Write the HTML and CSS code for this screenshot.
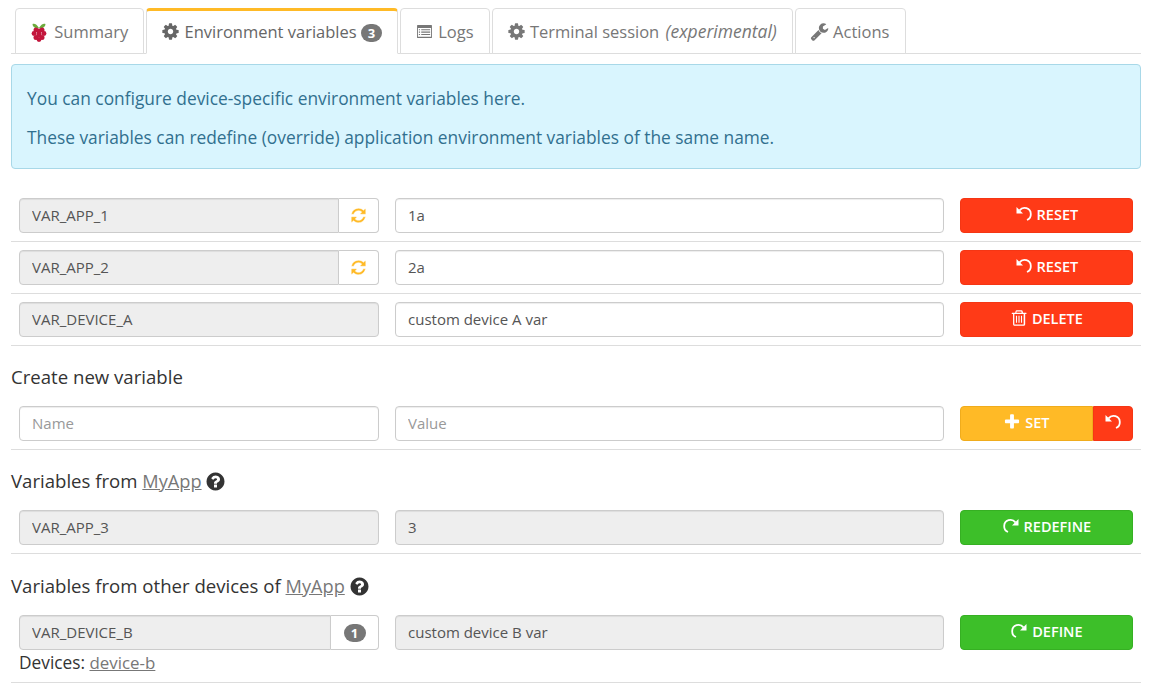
FILE: index.html
```html
<!DOCTYPE html>
<html lang="en">
<head>
  <meta charset="UTF-8" />
  <title>Environment variables</title>
  <link rel="stylesheet" href="styles.css">
</head>
<body>
  <svg class="sprite" xmlns="http://www.w3.org/2000/svg">
    <symbol id="i-cog" viewBox="0 0 1792 1792"><path d="M1152 896q0-106-75-181t-181-75-181 75-75 181 75 181 181 75 181-75 75-181zm512-109v222q0 12-8 23t-20 13l-185 28q-19 54-39 91 35 50 107 138 10 12 10 25t-9 23q-27 37-99 108t-94 71q-12 0-26-9l-138-108q-44 23-91 38-16 136-29 186-7 28-36 28h-222q-14 0-24.5-8.5t-11.5-21.5l-28-184q-49-16-90-37l-141 107q-10 9-25 9-14 0-25-11-126-114-165-168-7-10-7-23 0-12 8-23 15-21 51-66.5t54-70.5q-27-50-41-99l-183-27q-13-2-21-12.5t-8-23.5v-222q0-12 8-23t19-13l186-28q14-46 39-92-40-57-107-138-10-12-10-24 0-10 9-23 26-36 98.5-107.5t94.5-71.5q13 0 26 10l138 107q44-23 91-38 16-136 29-186 7-28 36-28h222q14 0 24.5 8.5t11.5 21.5l28 184q49 16 90 37l142-107q9-9 24-9 13 0 25 10 129 119 165 170 7 8 7 22 0 12-8 23-15 21-51 66.5t-54 70.5q26 50 41 98l183 28q13 2 21 12.5t8 23.5z"/></symbol>
    <symbol id="i-list" viewBox="-128 -128 2048 2048"><path fill-rule="evenodd" d="M160 192h1472q66 0 66 66v1276q0 66-66 66H160q-66 0-66-66V258q0-66 66-66zm32 320v928q0 32 32 32h1344q32 0 32-32V512z"/><path d="M288 640h128v128H288zM544 640h960v128H544zM288 896h128v128H288zM544 896h960v128H544zM288 1152h128v128H288zM544 1152h960v128H544z"/></symbol>
    <symbol id="i-wrench" viewBox="0 0 1792 1792"><path d="M448 1472q0-26-19-45t-45-19-45 19-19 45 19 45 45 19 45-19 19-45zm644-420l-682 682q-37 37-90 37-52 0-91-37l-106-108q-38-36-38-90 0-53 38-91l681-681q39 98 114.5 173.5t173.5 114.5zm634-435q0 39-23 106-47 134-164.5 217.5t-258.5 83.5q-185 0-316.5-131.5t-131.5-316.5 131.5-316.5 316.5-131.5q58 0 121.5 16.5t107.5 46.5q16 11 16 28t-16 28l-293 169v224l193 107q5-3 79-48.5t135.5-81 70.5-35.5q15 0 23.5 10t8.5 25z"/></symbol>
    <symbol id="i-refresh" viewBox="0 0 1792 1792"><path d="M1639 1056q0 5-1 7-64 268-268 434.5t-478 166.5q-146 0-282.5-55t-243.5-157l-129 129q-19 19-45 19t-45-19-19-45v-448q0-26 19-45t45-19h448q26 0 45 19t19 45-19 45l-137 137q71 66 161 102t187 36q134 0 250-65t186-179q11-17 53-117 8-23 30-23h192q13 0 22.5 9.5t9.5 22.5zm25-800v448q0 26-19 45t-45 19h-448q-26 0-45-19t-19-45 19-45l138-138q-148-137-349-137-134 0-250 65t-186 179q-11 17-53 117-8 23-30 23h-199q-13 0-22.5-9.5t-9.5-22.5v-7q65-268 270-434.5t480-166.5q146 0 284 55.5t245 156.5l130-129q19-19 45-19t45 19 19 45z"/></symbol>
    <symbol id="i-undo" viewBox="-1 -1 18 18"><path d="M0.5 1v6.5h6.5z"/><path class="arc" d="M3.6 4.4A6.2 6.2 0 0 1 14.8 8A6.2 6.2 0 0 1 11 14"/></symbol>
    <symbol id="i-repeat" viewBox="-1 -1 18 18"><path d="M15.5 1v6.5h-6.5z"/><path class="arc" d="M12.4 4.4A6.2 6.2 0 0 0 1.2 8A6.2 6.2 0 0 0 5 14"/></symbol>
    <symbol id="i-plus" viewBox="0 0 1792 1792"><path d="M1600 736v192q0 40-28 68t-68 28h-416v416q0 40-28 68t-68 28h-192q-40 0-68-28t-28-68v-416h-416q-40 0-68-28t-28-68v-192q0-40 28-68t68-28h416v-416q0-40 28-68t68-28h192q40 0 68 28t28 68v416h416q40 0 68 28t28 68z"/></symbol>
    <symbol id="i-help" viewBox="0 0 1792 1792"><path d="M1024 1376v-192q0-14-9-23t-23-9h-192q-14 0-23 9t-9 23v192q0 14 9 23t23 9h192q14 0 23-9t9-23zm256-672q0-88-55.5-163t-138.5-116-170-41q-243 0-371 213-15 24 8 42l132 100q7 6 19 6 16 0 25-12 53-68 86-92 34-24 86-24 48 0 85.5 26t37.5 59q0 38-20 61t-68 45q-63 28-115.5 86.5t-52.5 125.5v36q0 14 9 23t23 9h192q14 0 23-9t9-23q0-19 21.5-49.5t54.5-49.5q32-18 49-28.5t46-35 44.5-48 28-60.5 12.5-81zm384 192q0 209-103 385.5t-279.5 279.5-385.5 103-385.5-103-279.5-279.5-103-385.5 103-385.5 279.5-279.5 385.5-103 385.5 103 279.5 279.5 103 385.5z"/></symbol>
    <symbol id="i-trash" viewBox="0 0 1792 1792"><path fill-rule="evenodd" d="M640 128h512q40 0 68 28t40 68l36 152h312q32 0 32 32v64q0 32-32 32h-96v1024q0 132-112 132H416q-112 0-112-132V504h-96q-32 0-32-32v-64q0-32 32-32h312l36-152q12-40 48-68t36-28zm-4 248h520l-32-120H668zM432 504v1016q0 32 32 32h864q32 0 32-32V504z"/><path d="M592 680h110v700H592zM841 680h110v700H841zM1090 680h110v700h-110z"/></symbol>
  </svg>

  <ul class="tabs">
    <li class="tab">
      <svg class="berry" viewBox="0 0 16 20">
        <path fill="#6cab3c" d="M8 6C6 2 3 1 1.500 2c0 3 3 5 6.500 4zm0 0c2-4 5-5 6.500-4 0 3-3 5-6.500 4z"/>
        <g fill="#c3163c">
          <circle cx="5" cy="8" r="2.500"/><circle cx="11" cy="8" r="2.500"/><circle cx="8" cy="9" r="2.500"/>
          <circle cx="3" cy="11.500" r="2.400"/><circle cx="8" cy="12.500" r="2.600"/><circle cx="13" cy="11.500" r="2.400"/>
          <circle cx="5" cy="15.500" r="2.500"/><circle cx="11" cy="15.500" r="2.500"/><circle cx="8" cy="17.500" r="2.400"/>
        </g>
      </svg>
      Summary
    </li>
    <li class="tab active">
      <svg class="icon"><use href="#i-cog"/></svg>
      Environment variables <span class="badge">3</span>
    </li>
    <li class="tab"><svg class="icon"><use href="#i-list"/></svg> Logs</li>
    <li class="tab"><svg class="icon"><use href="#i-cog"/></svg> Terminal session <em>(experimental)</em></li>
    <li class="tab wrench"><svg class="icon"><use href="#i-wrench"/></svg> Actions</li>
  </ul>

  <div class="alert">
    <p>You can configure device-specific environment variables here.</p>
    <p>These variables can redefine (override) application environment variables of the same name.</p>
  </div>

  <div class="row">
    <div class="group">
      <input class="field" type="text" value="VAR_APP_1" readonly>
      <span class="addon"><svg class="icon sync"><use href="#i-refresh"/></svg></span>
    </div>
    <input class="field edit" type="text" value="1a">
    <button class="btn red"><svg class="icon"><use href="#i-undo"/></svg> Reset</button>
  </div>
  <div class="row">
    <div class="group">
      <input class="field" type="text" value="VAR_APP_2" readonly>
      <span class="addon"><svg class="icon sync"><use href="#i-refresh"/></svg></span>
    </div>
    <input class="field edit" type="text" value="2a">
    <button class="btn red"><svg class="icon"><use href="#i-undo"/></svg> Reset</button>
  </div>
  <div class="row">
    <input class="field" type="text" value="VAR_DEVICE_A" readonly>
    <input class="field edit" type="text" value="custom device A var">
    <button class="btn red"><svg class="icon"><use href="#i-trash"/></svg> Delete</button>
  </div>

  <h4 class="title">Create new variable</h4>
  <div class="row">
    <input class="field edit" type="text" placeholder="Name">
    <input class="field edit" type="text" placeholder="Value">
    <div class="btn-group">
      <button class="btn yellow"><svg class="icon"><use href="#i-plus"/></svg> Set</button>
      <button class="btn red small"><svg class="icon"><use href="#i-undo"/></svg></button>
    </div>
  </div>

  <h4 class="title">Variables from <a href="#">MyApp</a> <svg class="icon help"><use href="#i-help"/></svg></h4>
  <div class="row">
    <input class="field" type="text" value="VAR_APP_3" readonly>
    <input class="field" type="text" value="3" readonly>
    <button class="btn green"><svg class="icon"><use href="#i-repeat"/></svg> Redefine</button>
  </div>

  <h4 class="title last">Variables from other devices of <a href="#">MyApp</a> <svg class="icon help"><use href="#i-help"/></svg></h4>
  <div class="row tall">
    <div class="group">
      <input class="field" type="text" value="VAR_DEVICE_B" readonly>
      <span class="addon wide"><span class="badge">1</span></span>
    </div>
    <input class="field" type="text" value="custom device B var" readonly>
    <button class="btn green"><svg class="icon"><use href="#i-repeat"/></svg> Define</button>
    <div class="devices">Devices: <a href="#">device-b</a></div>
  </div>
</body>
</html>
```

FILE: styles.css
```css
* { box-sizing: border-box; }
body {
  margin: 0;
  padding: 8px 16px 0 11px;
  background: #fff;
  color: #333;
  font-family: "Open Sans", sans-serif;
  font-size: 16px;
}
.sprite { display: none; }
a { color: #777; text-decoration: underline; }

.icon {
  width: 19px;
  height: 19px;
  fill: currentColor;
  vertical-align: -3px;
}
.arc {
  fill: none;
  stroke: currentColor;
  stroke-width: 1.800;
}

.tabs {
  display: flex;
  gap: 2px;
  list-style: none;
  margin: 0;
  padding: 0 0 0 4px;
  height: 46px;
  border-bottom: 1px solid #ddd;
}
.tab {
  height: 46px;
  padding: 0 15px;
  line-height: 46px;
  color: #777;
  font-size: 16.500px;
  white-space: nowrap;
  background: #fff;
  border: 1px solid #ddd;
  border-radius: 4px 4px 0 0;
}
.tab .icon { margin-left: -1px; }
.tab.active {
  border-top: 3px solid #ffba26;
  border-bottom-color: #fff;
  line-height: 42px;
  color: #666;
}
.tab.wrench { padding-right: 16px; }
.tab em { margin-left: 2px; font-size: 1.060em; line-height: 1; }
.berry {
  width: 16px;
  height: 20px;
  margin-right: 3px;
  vertical-align: -4px;
}
.badge {
  display: inline-block;
  min-width: 21px;
  height: 18px;
  padding: 0 6px;
  border-radius: 9px;
  background: #777;
  color: #fff;
  font-size: 13px;
  font-weight: 700;
  line-height: 18px;
  text-align: center;
  vertical-align: 0;
}

.alert {
  height: 105px;
  margin-top: 10px;
  padding: 22px 15px 0;
  background: #d9f5fe;
  border: 1px solid #a8d8e8;
  border-radius: 4px;
  color: #31708f;
  font-size: 17.350px;
}
.alert p { margin: 0 0 17px; line-height: 22px; }
.alert p:last-child { margin: 0; }

.row {
  display: grid;
  grid-template-columns: 360px 549px 173px;
  align-content: start;
  column-gap: 16px;
  padding: 8px;
  border-bottom: 1px solid #ddd;
}
.alert + .row { margin-top: 21px; }
.row.tall { padding-bottom: 0; height: 76px; }
.devices {
  grid-column: 1;
  height: 24px;
  font-size: 17.300px;
  line-height: 26px;
}
.devices a { font-size: 16.900px; }

.field {
  width: 100%;
  min-width: 0;
  height: 35px;
  padding: 0 12px 1px;
  background: #eee;
  border: 1px solid #ccc;
  border-radius: 4px;
  box-shadow: inset 0 1px 1px rgba(0,0,0,0.075);
  color: #555;
  font-family: inherit;
  font-size: 15px;
}
.field.edit { background: #fff; }
.field::placeholder { color: #999; opacity: 1; }

.group { display: flex; }
.group .field { flex: 1; border-radius: 4px 0 0 4px; }
.addon {
  display: flex;
  flex: none;
  align-items: center;
  justify-content: center;
  width: 40px;
  height: 35px;
  padding-bottom: 1px;
  border: 1px solid #ccc;
  border-left: 0;
  border-radius: 0 4px 4px 0;
}
.addon.wide { width: 48px; padding-bottom: 0; }
.addon .badge { min-width: 22px; padding: 0; }
.sync {
  width: 17px;
  height: 17px;
  color: #ffba26;
  stroke: #fff;
  stroke-width: 50;
}

.btn {
  height: 35px;
  padding: 0 0 2px;
  border: 1px solid transparent;
  border-radius: 4px;
  color: #fff;
  font-family: inherit;
  font-size: 14.500px;
  font-weight: 600;
  text-transform: uppercase;
}
.btn .icon { width: 18px; height: 18px; vertical-align: -3px; }
.red { background: #ff3a17; border-color: #f53614; }
.yellow { background: #ffba26; border-color: #f0ac1c; }
.green { background: #3dbf29; border-color: #36b023; }
.btn-group { display: flex; }
.btn-group .yellow { flex: 1; border-radius: 4px 0 0 4px; }
.btn-group .small { width: 40px; border-radius: 0 4px 4px 0; }

.title {
  margin: 0;
  padding: 18px 0 0;
  height: 52px;
  color: #333;
  font-size: 18.600px;
  font-weight: 400;
  line-height: 25px;
}
.title a { font-size: 18.200px; }
.title.last { height: 53px; padding-top: 19px; }
.help {
  width: 21px;
  height: 21px;
  margin-left: -1px;
  color: #333;
  vertical-align: -4px;
}
```
